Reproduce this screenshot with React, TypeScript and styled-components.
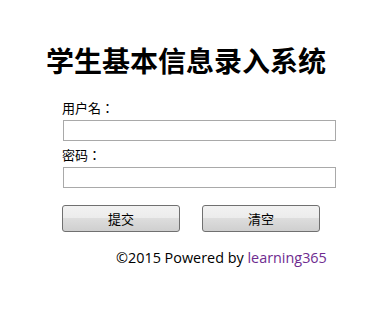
import styled, { createGlobalStyle } from "styled-components";

const GlobalStyle = createGlobalStyle`
  html, body {
    margin: 0;
    padding: 0;
    background: #ffffff;
  }
  body {
    font-family: "Open Sans", "Noto Sans CJK JP", sans-serif;
    color: #000000;
  }
`;

const Page = styled.div`
  width: 387px;
  height: 310px;
  padding-top: 44px;
  box-sizing: border-box;
`;

const Title = styled.h1`
  margin: 0 0 0 46px;
  font-family: "Noto Sans CJK SC", sans-serif;
  font-size: 28px;
  font-weight: 700;
  line-height: 32px;
`;

const Form = styled.form`
  margin: 23px 0 0 62px;
  width: 274px;
  display: flex;
  flex-direction: column;
`;

const Label = styled.label`
  font-family: "Noto Sans CJK JP", sans-serif;
  font-size: 13px;
  line-height: 18px;
  height: 18px;
`;

const Input = styled.input`
  display: block;
  box-sizing: border-box;
  width: 273px;
  height: 21px;
  margin: 3px 0 5px 1px;
  padding: 0 3px;
  border: 1px solid #a9a9a9;
  background: #ffffff;
  outline: none;
`;

const Buttons = styled.div`
  display: flex;
  gap: 22px;
  margin-top: 12px;
`;

const Button = styled.button`
  width: 118px;
  height: 27px;
  box-sizing: border-box;
  border: 1px solid #707070;
  border-radius: 3px;
  background: linear-gradient(#f2f2f2 0%, #ebebeb 50%, #dddddd 50%, #cfcfcf 100%);
  font-family: "Noto Sans CJK SC", sans-serif;
  font-size: 13px;
  color: #000000;
  padding: 0;
`;

const Footer = styled.p`
  margin: 16px 0 0 116px;
  font-size: 14.4px;
  line-height: 20px;
`;

const Link = styled.a`
  color: #6e2b8f;
  text-decoration: none;
`;

export default function App() {
  return (
    <>
      <GlobalStyle />
      <Page>
        <Title>学生基本信息录入系统</Title>
        <Form onSubmit={(e) => e.preventDefault()}>
          <Label>用户名：</Label>
          <Input type="text" />
          <Label>密码：</Label>
          <Input type="password" />
          <Buttons>
            <Button type="submit">提交</Button>
            <Button type="reset">清空</Button>
          </Buttons>
        </Form>
        <Footer>
          ©2015 Powered by <Link href="#">learning365</Link>
        </Footer>
      </Page>
    </>
  );
}
